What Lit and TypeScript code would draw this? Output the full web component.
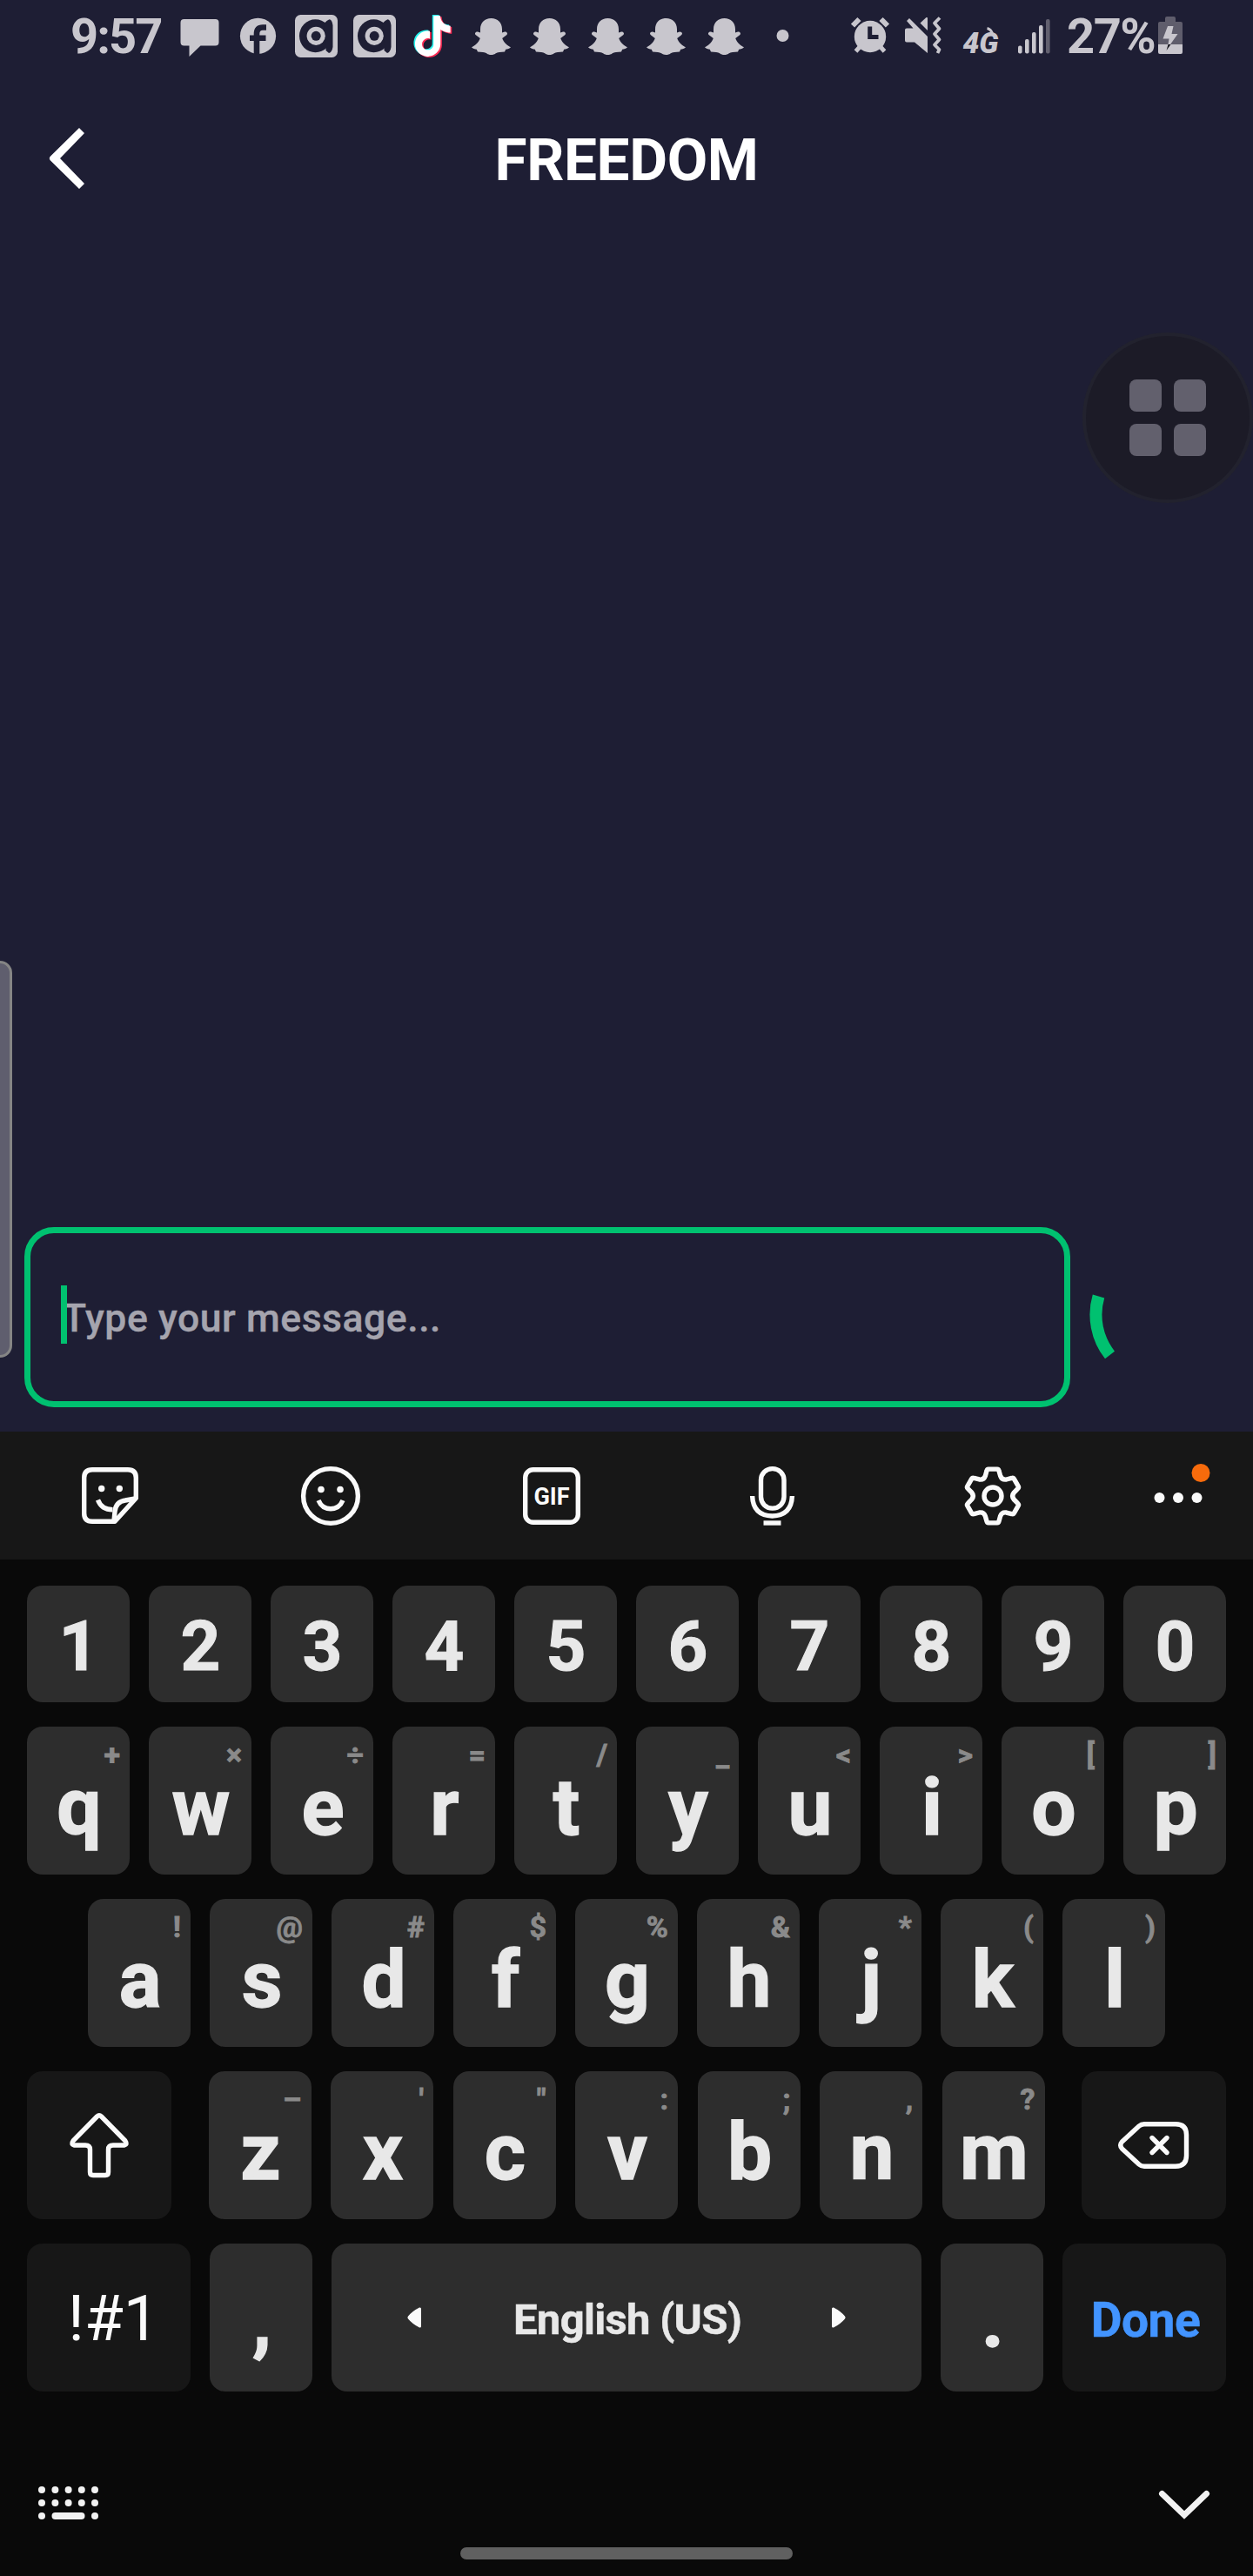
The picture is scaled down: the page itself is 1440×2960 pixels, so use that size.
import { LitElement, html, svg, css, nothing } from "lit";
import { customElement, property } from "lit/decorators.js";
import { classMap } from "lit/directives/class-map.js";

const TINT = "#c8c6cd";
const NAVY = "#1e1e34";

/* ---------- status bar glyphs, all drawn on a 67 x 84 cell ---------- */

const cell = (content: unknown) =>
  html`<svg width="67" height="84" viewBox="-33.5 0 67 84">${content}</svg>`;

const bubble = svg`<path fill=${TINT} d="M-18 22H18Q22 22 22 26V48.5Q22 52.500 18 52.500H1L-12 65V52.500H-18Q-22 52.500-22 48.500V26Q-22 22-18 22Z"/>`;

const facebook = svg`
  <circle cx="0" cy="41.300" r="20.600" fill=${TINT}/>
  <path d="M-1.500 63V39Q-1.500 31.500 5.500 31.500H9.500M-9.500 43.700H9" fill="none" stroke=${NAVY} stroke-width="6.600"/>`;

const audio = svg`
  <rect x="-24.500" y="17" width="49" height="49" rx="6.500" fill=${TINT}/>
  <ellipse cx="-1" cy="41.300" rx="18.500" ry="19" fill=${NAVY}/>
  <path fill=${NAVY} d="M9 27L12 24L15 22.300Q18 22.500 19 29V54Q18 60 14.500 61L11 58V52Z"/>
  <circle cx="-.300" cy="41.300" r="10.600" fill=${TINT}/>
  <circle cx="-.300" cy="41.300" r="5.500" fill=${NAVY}/>`;

const NOTE =
  "M12.525.02c1.31-.02 2.61-.01 3.91-.02.08 1.53.63 3.09 1.75 4.17 1.12 1.11 2.7 1.62 4.24 1.79v4.03c-1.44-.05-2.89-.35-4.2-.97-.57-.26-1.1-.59-1.62-.93-.01 2.92.01 5.84-.02 8.75-.08 1.4-.54 2.79-1.35 3.94-1.31 1.92-3.58 3.17-5.91 3.21-1.43.08-2.86-.31-4.08-1.03-2.02-1.19-3.44-3.37-3.65-5.71-.02-.5-.03-1-.01-1.49.18-1.9 1.12-3.72 2.58-4.96 1.66-1.44 3.98-2.13 6.15-1.72.02 1.48-.04 2.96-.04 4.44-.99-.32-2.15-.23-3.02.37-.63.41-1.11 1.04-1.36 1.75-.21.51-.15 1.07-.14 1.61.24 1.64 1.82 3.02 3.5 2.87 1.12-.01 2.19-.66 2.77-1.61.19-.33.4-.67.41-1.06.1-1.79.06-3.57.07-5.36.01-4.03-.01-8.05.02-12.07z";

const tiktok = svg`
  <path fill="#25f4ee" transform="translate(-25.100 17) scale(1.950)" d=${NOTE}/>
  <path fill="#fe2c55" transform="translate(-22 19.300) scale(1.950)" d=${NOTE}/>
  <path fill="#fff" transform="translate(-23.600 18.100) scale(1.950)" d=${NOTE}/>`;

const snap = svg`<path fill=${TINT} transform="translate(-22.500 21)" d="M22.500 0C15 0 10 5 10 12.500V16.500L7 15.500C4 15.300 3 18 5.200 19.600L9.800 23C8 28 4 31.500 0 33.200C1 34.800 4 35.200 5.800 35.800L7 38.600L13 39C17 39.300 18 42 22.500 42S28 39.300 32 39L38 38.600L39.200 35.800C41 35.200 44 34.800 45 33.200C41 31.500 37 28 35.200 23L39.800 19.600C42 18 41 15.300 38 15.500L35 16.500V12.500C35 5 30 0 22.500 0Z"/>`;

const more = svg`<circle cx="0" cy="41" r="7" fill=${TINT}/>`;

const notifications = [bubble, facebook, audio, audio, tiktok, snap, snap, snap, snap, snap, more];

const alarm = html`<svg width="44" height="84" viewBox="0 0 44 84">
  <circle cx="22" cy="42" r="18.200" fill=${TINT} />
  <path d="M2 29.500L9.500 22M42 29.500L34.500 22" stroke=${TINT} stroke-width="6" fill="none" />
  <path d="M10 54L5.500 59M34 54L38.500 59" stroke=${TINT} stroke-width="5" fill="none" />
  <path d="M21.700 30.500V42.500H31.500" stroke=${NAVY} stroke-width="5" fill="none" />
</svg>`;

const mute = html`<svg width="42" height="84" viewBox="0 0 42 84">
  <path fill=${TINT} d="M2 24L5 21L26 42V61L11 48.500H2Q0 48.500 0 46.500V34.500Q0 32.500 2 32.500H9.500Z" />
  <path fill=${TINT} d="M17.500 26.500L24.500 20Q26 19.500 26 21V35Z" />
  <path d="M40 20.500L34 26.500L39.500 33L34 39L39.500 45.500L34 51.500L39.500 57L37.500 61" stroke=${TINT} stroke-width="3.800" stroke-linejoin="round" fill="none" />
</svg>`;

const network = html`<svg width="42" height="84" viewBox="0 0 42 84">
  <text class="net" x="-.500" y="61" textLength="41" lengthAdjust="spacingAndGlyphs">4G</text>
  <path d="M27.500 32.500Q32 33.500 33.500 39" stroke=${TINT} stroke-width="3" fill="none" />
</svg>`;

const signal = html`<svg width="37" height="84" viewBox="0 0 37 84">
  ${[9, 16.5, 24.5, 32.5, 39.5].map(
    (h, i) => svg`<rect x=${i * 8} y=${61.5 - h} width="4.600" height=${h} rx="2" fill=${i === 4 ? "#62606f" : TINT}/>`
  )}
</svg>`;

const battery = html`<svg width="28" height="84" viewBox="0 0 28 84">
  <path fill="#5f5d6c" d="M10 19H18Q20 19 20 21V25H26Q28 25 28 27V51H0V27Q0 25 2 25H8V21Q8 19 10 19Z" />
  <path fill=${TINT} d="M0 51H28V60Q28 62 26 62H2Q0 62 0 60Z" />
  <path fill=${TINT} d="M11 30H17.500L15.500 39H22.500L14 51H11.500L12.500 44.500H5.500Z" />
  <path fill="#17171f" d="M11.500 51H14.500L9.500 58Z" />
</svg>`;

/* ---------- keyboard toolbar glyphs ---------- */

const sticker = html`<svg class="line" width="65" height="65" viewBox="0 0 65 65">
  <path d="M38 62.300H12Q2.700 62.300 2.700 53V12Q2.700 2.700 12 2.700H53Q62.300 2.700 62.300 12V35.500Z" />
  <path d="M37 61.500L38 51Q39 39.500 50 38L61.500 36" />
  <path d="M18.500 37.500Q22.500 48.500 35.500 48.800" />
  <circle class="solid" cx="22.700" cy="24.500" r="3.700" />
  <circle class="solid" cx="43.300" cy="24.500" r="3.700" />
</svg>`;

const smile = html`<svg class="line" width="68" height="68" viewBox="0 0 68 68">
  <circle cx="34" cy="34" r="31.400" />
  <path d="M20 39Q24 48.700 34 48.700T48 39" />
  <circle class="solid" cx="23" cy="26.500" r="3.800" />
  <circle class="solid" cx="45" cy="26.500" r="3.800" />
</svg>`;

const gif = html`<svg class="line" width="66" height="66" viewBox="0 0 66 66">
  <rect x="2.700" y="2.700" width="60.600" height="60.600" rx="9" />
  <text class="gif" x="33" y="43" text-anchor="middle">GIF</text>
</svg>`;

const mic = html`<svg class="line" width="51" height="68" viewBox="0 0 51 68">
  <rect x="12.500" y="2.600" width="26.500" height="45.500" rx="13" />
  <path d="M2.600 34Q3.500 56.500 25.500 57Q47.500 56.500 48.400 34" />
  <path d="M15.500 65H35.500" />
</svg>`;

function gearOutline(): string {
  const parts: string[] = [];
  for (let k = 0; k < 6; k++) {
    const a = (k * Math.PI) / 3;
    const at = (x: number, y: number) =>
      `${(x * Math.cos(a) - y * Math.sin(a)).toFixed(2)} ${(x * Math.sin(a) + y * Math.cos(a)).toFixed(2)}`;
    parts.push(
      `${k ? "L" : "M"}${at(-7, -29)}Q${at(-6.6, -30.9)} ${at(-5, -30.9)}L${at(5, -30.9)}Q${at(6.6, -30.9)} ${at(7, -29)}`,
      `L${at(8.7, -23)}Q${at(10.5, -18.2)} ${at(15.6, -19)}`
    );
  }
  return parts.join("") + "Z";
}

const gear = html`<svg class="line" width="68" height="68" viewBox="-34 -34 68 68">
  <path d=${gearOutline()} />
  <circle cx="0" cy="0" r="10" />
</svg>`;

const overflow = html`<svg width="64" height="68" viewBox="0 0 64 68">
  <g fill="#fafafa">
    <circle cx="10.500" cy="36" r="6" /><circle cx="32" cy="36" r="6" /><circle cx="53.500" cy="36" r="6" />
  </g>
  <circle cx="58" cy="7.500" r="10.500" fill="#f76b0c" />
</svg>`;

/* ---------- key glyphs ---------- */

const shiftIcon = html`<svg class="line" width="68" height="75" viewBox="0 0 68 75">
  <path d="M31.500 4Q34 1.500 36.500 4L64 32Q67 36 62.500 37H50Q44.500 37 44.500 42V68Q44.500 71.500 41 71.500H27Q23.500 71.500 23.500 68V42Q23.500 37 18 37H5.500Q1 36 4 32Z" />
</svg>`;

const eraseIcon = html`<svg class="line" width="82" height="54" viewBox="0 0 82 54">
  <path d="M30 2.800H66Q78.500 2.800 78.500 15V39Q78.500 51.200 66 51.200H30Q26.500 51.200 24 49L4.500 31Q1 27 4.500 23L24 5Q26.500 2.800 30 2.800Z" />
  <path d="M39 18.500L56 35.500M56 18.500L39 35.500" stroke-linecap="round" />
</svg>`;

const arrow = (flip: boolean) => html`<svg width="16" height="24" viewBox="0 0 16 24">
  <path fill="#fafafa" transform=${flip ? "translate(16 0) scale(-1 1)" : "scale(1)"}
    d="M14 .500Q16 0 16 2V22Q16 24 14 23.500Q6 19.500 1 13.500Q-.300 12 1 10.500Q6 4.500 14 .500Z" />
</svg>`;

const keyboardIcon = html`<svg width="70" height="40" viewBox="0 0 70 40">
  <g fill="#f2f2f2">
    ${[5, 20.4, 35.6, 50.8, 66].map((x) => [5, 20].map((y) => svg`<circle cx=${x} cy=${y} r="4"/>`))}
    <circle cx="5" cy="35" r="4" /><circle cx="66" cy="35" r="4" />
    <rect x="16.500" y="31" width="38" height="8" rx="4" />
  </g>
</svg>`;

const collapseIcon = html`<svg width="60" height="36" viewBox="0 0 60 36">
  <path d="M4.500 4.500L30 29L55.500 4.500" fill="none" stroke="#f2f2f2" stroke-width="7" stroke-linecap="round" />
</svg>`;

/* ---------- elements ---------- */

@customElement("kb-key")
class KbKey extends LitElement {
  @property() label = "";
  @property() hint = "";
  @property() kind = "letter";

  static styles = css`
    :host {
      display: block;
      position: relative;
      width: 118px;
      border-radius: 18px;
      background: #2d2d2d;
      color: #e8e8e8;
      font-family: Roboto, sans-serif;
    }
    :host([dark]) { background: #171717; }
    :host([wide]) { width: 188px; }
    :host([mid]) { width: 166px; }
    :host([space]) { width: 678px; }
    .face {
      display: flex;
      height: 100%;
      box-sizing: border-box;
      align-items: center;
      justify-content: center;
      font-weight: 700;
      line-height: 1;
      white-space: nowrap;
    }
    .letter { font-size: 91px; padding: 16px 0 0 2px; -webkit-text-stroke: 1.3px currentColor; }
    .digit { font-size: 80px; padding: 6px 0 0 1px; -webkit-text-stroke: 1px currentColor; }
    .punct { font-size: 91px; padding: 6px 0 0 2px; -webkit-text-stroke: 1.3px currentColor; }
    .symbols { font-size: 73px; font-weight: 400; padding: 2px 0 0 11px; color: #fafafa; }
    .done { font-size: 55px; padding: 6px 0 0 3px; color: #4294ff; letter-spacing: -0.5px; -webkit-text-stroke: 0.6px currentColor; }
    .hint {
      position: absolute;
      top: 15px;
      right: 11px;
      font-size: 34px;
      line-height: 34px;
      font-weight: 700;
      color: #8a8a8a;
      -webkit-text-stroke: 0.8px currentColor;
    }
  `;

  render() {
    return html`
      <div class=${classMap({ face: true, [this.kind]: true })}>${this.label || html`<slot></slot>`}</div>
      ${this.hint ? html`<span class="hint">${this.hint}</span>` : nothing}
    `;
  }
}

const letters = (keys: string, hints: string) =>
  [...keys].map((k, i) => html`<kb-key label=${k} hint=${[...hints][i]}></kb-key>`);

@customElement("app-root")
class AppRoot extends LitElement {
  static styles = css`
    :host {
      display: flex;
      flex-direction: column;
      position: relative;
      width: 1440px;
      height: 2960px;
      overflow: hidden;
      background: #1e1e34;
      font-family: Roboto, sans-serif;
      color: #fff;
    }
    svg { display: block; flex: none; overflow: visible; }
    .line {
      fill: none;
      stroke: #fafafa;
      stroke-width: 5.4;
      stroke-linejoin: round;
    }
    .line .solid { fill: #fafafa; stroke: none; }
    .status {
      display: flex;
      height: 84px;
      padding: 0 81px;
      color: #c8c6cd;
      font-size: 56px;
      font-weight: 700;
      line-height: 84px;
    }
    .clock { width: 114.5px; letter-spacing: -1.9px; }
    .notes { display: flex; flex: 1; }
    .system { display: flex; }
    .system .gap-a { margin-left: 18px; }
    .system .gap-b { margin-left: 25px; }
    .system .gap-c { margin-left: 21px; }
    .percent { width: 99px; margin: 0 6px 0 19px; letter-spacing: -1.5px; white-space: nowrap; }
    .net { font: italic 900 33px Roboto, sans-serif; fill: #c8c6cd; }
    .gif { font: 700 27px Roboto, sans-serif; fill: #fafafa; stroke: none; }
    .header {
      display: grid;
      grid-template-columns: 160px 1fr 160px;
      align-items: center;
      height: 200px;
    }
    .back { margin: -4px 0 0 56px; }
    h1 {
      margin: 0;
      text-align: center;
      font-size: 67.5px;
      line-height: 80px;
      font-weight: 700;
      letter-spacing: -0.4px;
    }
    .chat { flex: 1; }
    .compose {
      display: flex;
      align-items: center;
      height: 207px;
      padding: 0 0 28px 28px;
      gap: 21px;
    }
    .field {
      display: flex;
      align-items: center;
      width: 1202px;
      height: 207px;
      box-sizing: border-box;
      padding-left: 35px;
      border: 7px solid #00c170;
      border-radius: 34px;
    }
    .caret { width: 7px; height: 67px; margin-top: -6px; background: #00c170; z-index: 1; }
    .placeholder {
      margin: 2px 0 0 -5px;
      color: #a5a4ae;
      font-size: 44.5px;
      line-height: 54px;
      font-weight: 500;
      letter-spacing: 0.55px;
      -webkit-text-stroke: 0.4px currentColor;
    }
    .edge {
      position: absolute;
      left: -20px;
      top: 1104px;
      width: 34px;
      height: 456px;
      box-sizing: border-box;
      border: 3px solid #858585;
      border-radius: 14px;
      background: #5f5e6e;
    }
    .assist {
      position: absolute;
      left: 1244px;
      top: 382px;
      width: 196px;
      height: 196px;
      box-sizing: border-box;
      display: grid;
      grid-template-columns: 37px 37px;
      gap: 14px;
      place-content: center;
      border: 4px solid #22222e;
      border-radius: 50%;
      background: #1c1b27;
    }
    .assist i { height: 37px; border-radius: 8px; background: #62606d; }
    .tools {
      display: grid;
      grid-template-columns: repeat(5, 253.5px) 172.5px;
      place-items: center;
      height: 147px;
      background: #171717;
    }
    .keyboard {
      display: flex;
      flex-direction: column;
      gap: 28px;
      height: 1168px;
      box-sizing: border-box;
      padding: 30px 31px 0;
      background: #090909;
    }
    .row { display: flex; gap: 22px; height: 170px; justify-content: center; }
    .row.digits { height: 134px; }
    .row.spread { justify-content: space-between; }
    .group { display: flex; gap: 22.5px; }
    .lang {
      font-size: 49px;
      font-weight: 700;
      letter-spacing: -0.7px;
      -webkit-text-stroke: 0.5px currentColor;
      width: 262px;
      margin: 4px 104px 0 106px;
      text-align: center;
    }
    .foot {
      display: flex;
      justify-content: space-between;
      align-items: center;
      height: 40px;
      margin-top: 80px;
      padding: 0 17px 0 12px;
    }
    .pill {
      align-self: center;
      width: 382px;
      height: 14px;
      margin-top: 3px;
      border-radius: 7px;
      background: #606060;
    }
    .foot svg:last-child { margin-right: 1px; margin-top: 6px; }
  `;

  render() {
    return html`
      <div class="status">
        <span class="clock">9:57</span>
        <div class="notes">${notifications.map(cell)}</div>
        <div class="system">
          ${alarm}
          <div class="gap-a">${mute}</div>
          <div class="gap-b">${network}</div>
          <div class="gap-c">${signal}</div>
          <span class="percent">27%</span>
          ${battery}
        </div>
      </div>
      <div class="header">
        <svg class="back" width="42" height="70" viewBox="0 0 42 70">
          <path fill="#fff" d="M35 0L41 6L13 35L41 64L35 70L1.500 37Q0 35 1.500 33Z" />
        </svg>
        <h1>FREEDOM</h1>
      </div>
      <div class="chat"></div>
      <div class="compose">
        <div class="field">
          <span class="caret"></span>
          <span class="placeholder">Type your message...</span>
        </div>
        <svg width="60" height="90" viewBox="0 0 60 90">
          <path d="M11.500 20.500A75 75 0 0 0 24.500 88" fill="none" stroke="#00c170" stroke-width="14" />
        </svg>
      </div>
      <div class="tools">${sticker}${smile}${gif}${mic}${gear}${overflow}</div>
      <div class="keyboard">
        <div class="row digits">
          ${[..."1234567890"].map((d) => html`<kb-key kind="digit" label=${d}></kb-key>`)}
        </div>
        <div class="row">${letters("qwertyuiop", "+×÷=/_<>[]")}</div>
        <div class="row">${letters("asdfghjkl", "!@#$%&*()")}</div>
        <div class="row spread">
          <kb-key mid dark kind="icon">${shiftIcon}</kb-key>
          <div class="group">${letters("zxcvbnm", "–'\":;,?")}</div>
          <kb-key mid dark kind="icon">${eraseIcon}</kb-key>
        </div>
        <div class="row">
          <kb-key wide dark kind="symbols" label="!#1"></kb-key>
          <kb-key kind="punct" label=","></kb-key>
          <kb-key space kind="bar">${arrow(false)}<span class="lang">English (US)</span>${arrow(true)}</kb-key>
          <kb-key kind="punct" label="."></kb-key>
          <kb-key wide dark kind="done" label="Done"></kb-key>
        </div>
        <div class="foot">${keyboardIcon}${collapseIcon}</div>
        <div class="pill"></div>
      </div>
      <div class="edge"></div>
      <div class="assist"><i></i><i></i><i></i><i></i></div>
    `;
  }
}
